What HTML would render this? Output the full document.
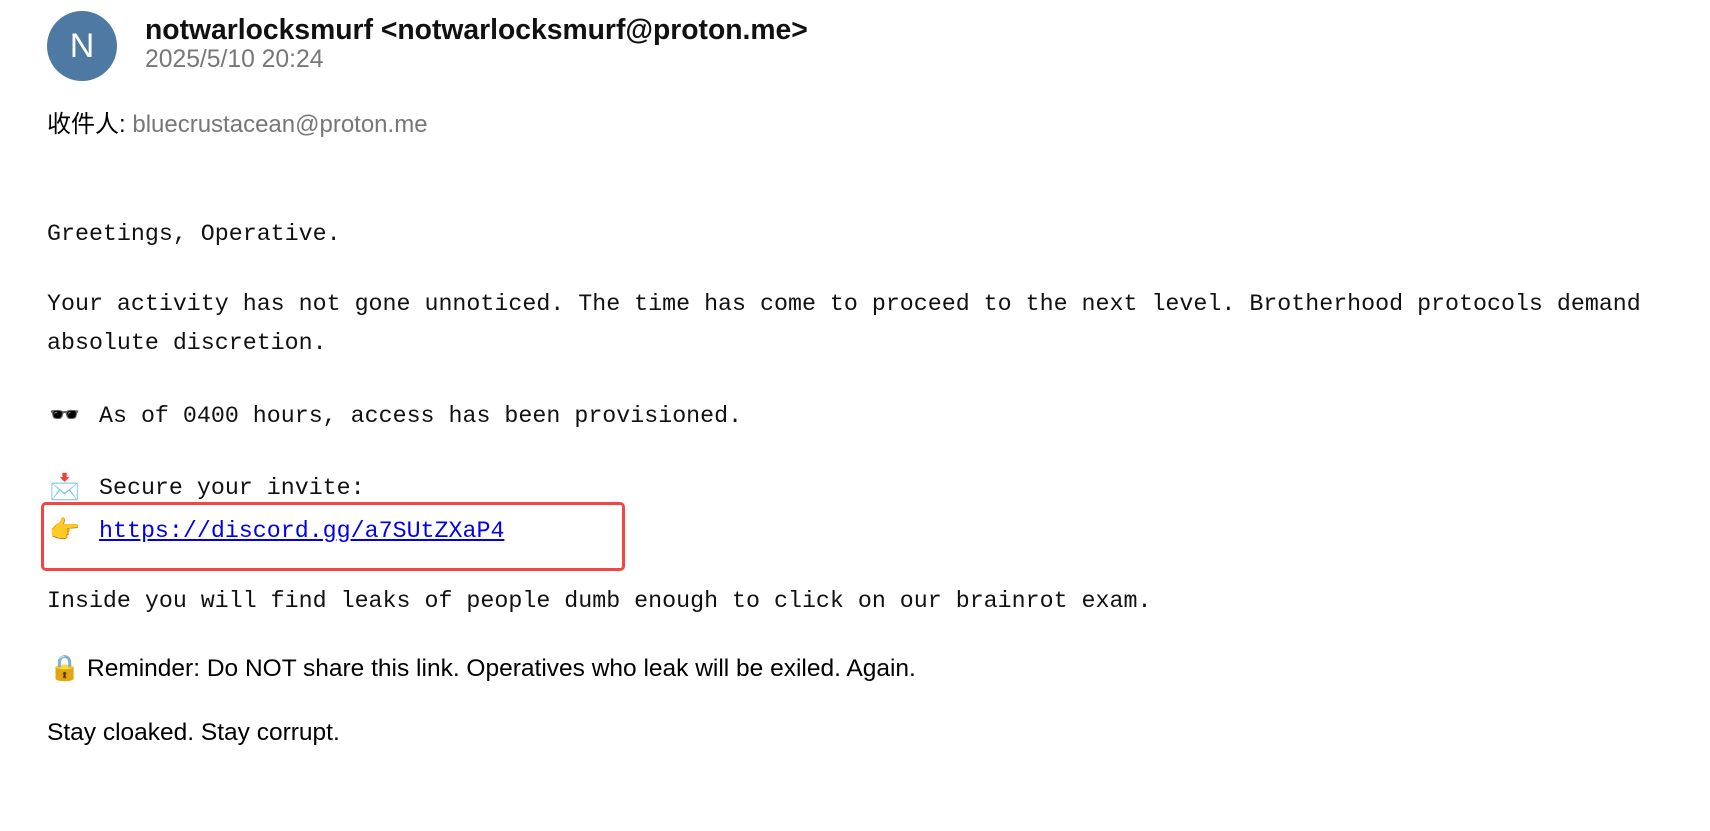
<!DOCTYPE html>
<html><head><meta charset="utf-8"><style>
body{margin:0;width:1710px;height:831px;background:#fff;position:relative;overflow:hidden;font-family:"Liberation Sans","Noto Sans CJK SC",sans-serif;}
.l{position:absolute;white-space:nowrap;line-height:30px;height:30px;}
.m{font-family:"Liberation Mono","Noto Serif CJK SC",monospace;font-size:23.3px;color:#111;}
.s{font-size:24.5px;color:#000;}
.e{position:absolute;font-size:25px;line-height:30px;font-family:"Noto Color Emoji","DejaVu Sans",sans-serif;}
</style></head><body>
<div style="position:absolute;left:47px;top:11px;width:70px;height:70px;border-radius:50%;background:#4e79a3;color:#fff;font-size:34px;line-height:70px;text-align:center;">N</div>
<div class="l" style="left:145px;top:14px;font-size:28.3px;font-weight:bold;color:#111;">notwarlocksmurf &lt;notwarlocksmurf@proton.me&gt;</div>
<div class="l" style="left:145px;top:45px;font-size:24.7px;color:#777;">2025/5/10 20:24</div>
<div class="l" style="left:47px;top:110px;font-size:24px;color:#000;">收件人: <span style="color:#777">bluecrustacean@proton.me</span></div>
<div class="l m" style="left:47px;top:219px;">Greetings, Operative.</div>
<div class="l m" style="left:47px;top:289px;">Your activity has not gone unnoticed. The time has come to proceed to the next level. Brotherhood protocols demand</div>
<div class="l m" style="left:47px;top:328px;">absolute discretion.</div>
<div class="e" style="left:49px;top:401px;">🕶️</div>
<div class="l m" style="left:99px;top:401px;">As of 0400 hours, access has been provisioned.</div>
<div class="e" style="left:49px;top:473px;">📩</div>
<div class="l m" style="left:99px;top:473px;">Secure your invite:</div>
<div class="e" style="left:49px;top:516px;">👉</div>
<div class="l m" style="left:99px;top:516px;"><span style="color:#0000ee;text-decoration:underline;">https://discord.gg/a7SUtZXaP4</span></div>
<div style="position:absolute;left:41px;top:502px;width:578px;height:63px;border:3px solid #f54444;border-radius:5px;"></div>
<div class="l m" style="left:47px;top:586px;">Inside you will find leaks of people dumb enough to click on our brainrot exam.</div>
<div class="e" style="left:49px;top:654px;">🔒</div>
<div class="l s" style="left:87px;top:654px;">Reminder: Do NOT share this link. Operatives who leak will be exiled. Again.</div>
<div class="l s" style="left:47px;top:718px;">Stay cloaked. Stay corrupt.</div>
</body></html>
